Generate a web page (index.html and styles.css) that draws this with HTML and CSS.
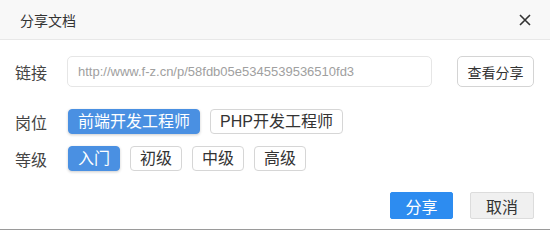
FILE: index.html
```html
<!DOCTYPE html>
<html lang="zh-CN">
<head>
<meta charset="utf-8">
<title>分享文档</title>
<link rel="stylesheet" href="styles.css">
</head>
<body>
<div class="dialog">
  <div class="header">
    <span class="title">分享文档</span>
    <span class="close" aria-label="关闭">
      <svg width="12" height="12" viewBox="0 0 12 12"><path d="M1 1L11 11M11 1L1 11" stroke="#333" stroke-width="1.6" fill="none"/></svg>
    </span>
  </div>
  <div class="body">
    <div class="row row-link">
      <span class="label">链接</span>
      <div class="input">http://www.f-z.cn/p/58fdb05e5345539536510fd3</div>
      <button class="btn btn-view">查看分享</button>
    </div>
    <div class="row row-tags">
      <span class="label">岗位</span>
      <div class="tags">
        <span class="tag active">前端开发工程师</span>
        <span class="tag">PHP开发工程师</span>
      </div>
    </div>
    <div class="row row-tags row-level">
      <span class="label">等级</span>
      <div class="tags">
        <span class="tag active">入门</span>
        <span class="tag">初级</span>
        <span class="tag">中级</span>
        <span class="tag">高级</span>
      </div>
    </div>
  </div>
  <div class="footer">
    <button class="btn btn-primary">分享</button>
    <button class="btn btn-cancel">取消</button>
  </div>
</div>
</body>
</html>
```
FILE: styles.css
```css
* { box-sizing: border-box; }
html, body { margin: 0; padding: 0; background: #fff; }
body {
  font-family: "Liberation Sans", "Noto Sans CJK SC", sans-serif;
  color: #333;
}
.dialog {
  width: 550px;
  height: 230px;
  border-bottom: 1px solid #9a9a9a;
  display: flex;
  flex-direction: column;
}
.header {
  height: 40px;
  background: #f8f8f8;
  border-bottom: 1px solid #e8e8e8;
  display: flex;
  align-items: center;
  justify-content: space-between;
  padding: 0 19px 0 20px;
}
.title {
  font-family: "Noto Sans CJK SC", sans-serif;
  font-size: 14px;
  line-height: 20px;
  color: #333;
}
.close { display: flex; width: 12px; height: 12px; }
.body {
  padding: 16px 16px 0 15px;
}
.row {
  display: flex;
  align-items: center;
}
.label {
  width: 52px;
  flex: none;
  font-family: "Noto Sans CJK SC", sans-serif;
  font-size: 16px;
  line-height: 20px;
  color: #444;
}
.row-link { height: 31px; margin-bottom: 22px; }
.input {
  width: 365px;
  height: 31px;
  border: 1px solid #e6e6e6;
  border-radius: 5px;
  padding: 0 10px;
  font-size: 13px;
  line-height: 29px;
  color: #a0a0a0;
  white-space: nowrap;
  overflow: hidden;
}
.btn {
  font-family: "Noto Sans CJK SC", sans-serif;
  cursor: pointer;
  padding: 0;
  margin: 0;
}
.btn-view {
  margin-left: 25px;
  width: 77px;
  height: 31px;
  border: 1px solid #d4d4d4;
  border-radius: 5px;
  background: #fff;
  font-size: 14px;
  color: #333;
}
.row-tags { height: 25px; margin-bottom: 12px; }
.tags { display: flex; gap: 10px; margin-left: 1px; }
.tag {
  height: 25px;
  padding: 0 9px;
  border: 1px solid #d6d6d6;
  border-radius: 4px;
  font-family: "Liberation Sans", "Noto Sans CJK SC", sans-serif;
  font-size: 16px;
  line-height: 23px;
  color: #333;
  background: #fff;
  white-space: nowrap;
}
.tag.active {
  background: #4a90e2;
  border-color: #4a90e2;
  color: #fff;
  box-shadow: 0 1px 3px rgba(0, 0, 0, 0.2);
}
.footer {
  margin-top: auto;
  display: flex;
  justify-content: flex-end;
  gap: 17px;
  padding: 0 16px 10px 0;
}
.btn-primary {
  width: 63px;
  height: 27px;
  border: 1px solid #2d8cf0;
  border-radius: 2px;
  background: #2d8cf0;
  color: #fff;
  font-size: 16px;
}
.btn-cancel {
  width: 64px;
  height: 27px;
  border: 1px solid #dcdcdc;
  border-radius: 2px;
  background: #f0f0f0;
  color: #333;
  font-size: 16px;
}
```
